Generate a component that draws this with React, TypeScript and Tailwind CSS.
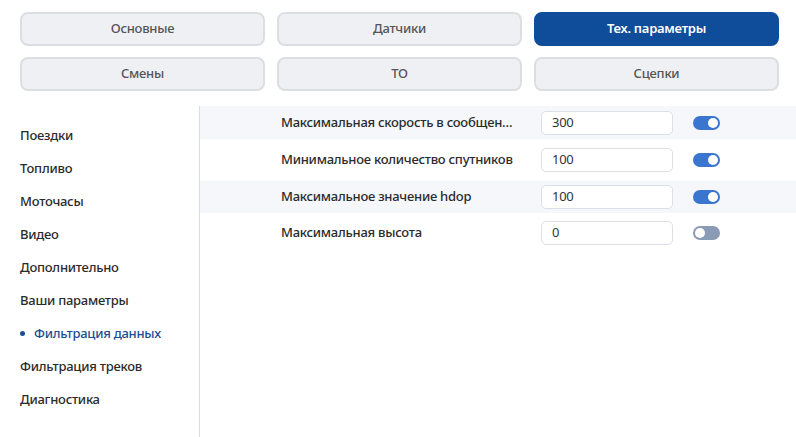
import React from "react";

const tabs = [
  { label: "Основные", active: false },
  { label: "Датчики", active: false },
  { label: "Тех. параметры", active: true },
  { label: "Смены", active: false },
  { label: "ТО", active: false },
  { label: "Сцепки", active: false },
];

const menu = [
  "Поездки",
  "Топливо",
  "Моточасы",
  "Видео",
  "Дополнительно",
  "Ваши параметры",
  "Фильтрация данных",
  "Фильтрация треков",
  "Диагностика",
];

const rows = [
  { label: "Максимальная скорость в сообщениях", value: "300", on: true, bg: true, h: "h-[33px]" },
  { label: "Минимальное количество спутников", value: "100", on: true, bg: false, h: "h-[42px]" },
  { label: "Максимальное значение hdop", value: "100", on: true, bg: true, h: "h-[32px]" },
  { label: "Максимальная высота", value: "0", on: false, bg: false, h: "h-[39px]" },
];

function Toggle({ on }: { on: boolean }) {
  return (
    <div
      className={
        "relative w-[27px] h-[14px] rounded-full " +
        (on ? "bg-[#3a76cf]" : "bg-[#8a9bb6]")
      }
    >
      <div
        className={
          "absolute top-[2px] w-[10px] h-[10px] rounded-full bg-white " +
          (on ? "right-[2px]" : "left-[2px]")
        }
      />
    </div>
  );
}

export default function App() {
  return (
    <div
      className="w-[796px] h-[437px] bg-white overflow-hidden text-[13px] tracking-[-0.25px]"
      style={{ fontFamily: '"Noto Sans", "Open Sans", sans-serif' }}
    >
      <div className="grid grid-cols-3 gap-x-[12px] gap-y-[11px] pl-[20px] pr-[17px] pt-[12px]">
        {tabs.map((t) => (
          <div
            key={t.label}
            className={
              "h-[34px] rounded-[8px] flex items-center justify-center font-medium " +
              (t.active
                ? "bg-[#0f4c9a] text-white border-2 border-[#0f4c9a] font-semibold"
                : "bg-[#eff0f4] text-[#555] border-2 border-[#dcdee3]")
            }
          >
            {t.label}
          </div>
        ))}
      </div>
      <div className="flex mt-[15px] h-[333px]">
        <div className="w-[200px] shrink-0 border-r border-[#dcdcdc] pt-[13px]">
          {menu.map((m, i) =>
            i === 6 ? (
              <div key={m} className="h-[33px] flex items-center pl-[20px] font-medium text-[#1b4f93]">
                <span className="w-[5px] h-[5px] rounded-full bg-[#1b4f93] mr-[9px]" />
                {m}
              </div>
            ) : (
              <div key={m} className="h-[33px] flex items-center pl-[20px] font-medium text-[#2b2b2b]">
                {m}
              </div>
            )
          )}
        </div>
        <div className="flex-1">
          {rows.map((r) => (
            <div
              key={r.label}
              className={
                "flex items-center " + r.h + " " + (r.bg ? "bg-[#f5f7fa]" : "bg-white")
              }
            >
              <div className="w-[235px] ml-[81px] mr-[25px] truncate font-medium text-[#2b2b2b]">
                {r.label}
              </div>
              <div className="w-[132px] h-[24px] rounded-[5px] border border-[#dcdfe6] bg-white flex items-center pl-[10px] text-[#333]">
                {r.value}
              </div>
              <div className="ml-[20px]">
                <Toggle on={r.on} />
              </div>
            </div>
          ))}
        </div>
      </div>
    </div>
  );
}
